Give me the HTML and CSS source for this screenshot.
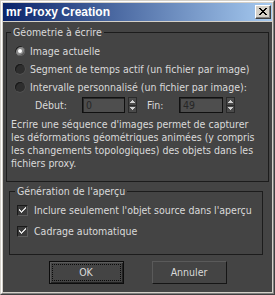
FILE: index.html
```html
<!DOCTYPE html>
<html lang="fr">
<head>
<meta charset="utf-8">
<title>mr Proxy Creation</title>
<link rel="stylesheet" href="styles.css">
</head>
<body>
<div class="window">
  <div class="frame">
    <div class="titlebar">
      <span class="title">mr Proxy Creation</span>
      <button class="close" aria-label="Fermer">
        <svg width="8" height="7" viewBox="0 0 8 7" shape-rendering="crispEdges"><path d="M0 0h2v1H0zM6 0h2v1H6zM1 1h2v1H1zM5 1h2v1H5zM2 2h4v1H2zM3 3h2v1H3zM2 4h4v1H2zM1 5h2v1H1zM5 5h2v1H5zM0 6h2v1H0zM6 6h2v1H6z" fill="#000"/></svg>
      </button>
    </div>
    <div class="client">
      <fieldset class="group g1">
        <legend>Géometrie à écrire</legend>
        <div class="opt"><span class="radio on"></span><span>Image actuelle</span></div>
        <div class="opt"><span class="radio"></span><span>Segment de temps actif (un fichier par image)</span></div>
        <div class="opt"><span class="radio"></span><span>Intervalle personnalisé (un fichier par image):</span></div>
        <div class="range">
          <span class="lbl deb">Début:</span>
          <span class="field f1">0</span>
          <span class="arrows"><svg width="9" height="16" viewBox="0 0 9 16" shape-rendering="crispEdges"><path d="M4 3h1v1H4zM3 4h3v1H3zM2 5h5v1H2z" fill="#d0d0d0"/><path d="M1 8h7v1H1z" fill="#2a2a2a"/><path d="M2 10h5v1H2zM3 11h3v1H3zM4 12h1v1H4z" fill="#d0d0d0"/></svg></span>
          <span class="lbl fin">Fin:</span>
          <span class="field f2">49</span>
          <span class="arrows"><svg width="9" height="16" viewBox="0 0 9 16" shape-rendering="crispEdges"><path d="M4 3h1v1H4zM3 4h3v1H3zM2 5h5v1H2z" fill="#d0d0d0"/><path d="M1 8h7v1H1z" fill="#2a2a2a"/><path d="M2 10h5v1H2zM3 11h3v1H3zM4 12h1v1H4z" fill="#d0d0d0"/></svg></span>
        </div>
        <p class="desc">Ecrire une séquence d'images permet de capturer<br>les déformations géométriques animées (y compris<br>les changements topologiques) des objets dans les<br>fichiers proxy.</p>
      </fieldset>
      <fieldset class="group g2">
        <legend>Génération de l'aperçu</legend>
        <div class="chk"><span class="box"><svg width="9" height="9" viewBox="0 0 9 9" shape-rendering="crispEdges"><path d="M7 1h1v1H7zM6 2h2v1H6zM1 3h1v1H1zM5 3h2v1H5zM1 4h2v1H1zM4 4h2v1H4zM2 5h3v1H2zM3 6h1v1H3z" fill="#dcdcdc"/></svg></span><span>Inclure seulement l'objet source dans l'aperçu</span></div>
        <div class="chk"><span class="box"><svg width="9" height="9" viewBox="0 0 9 9" shape-rendering="crispEdges"><path d="M7 1h1v1H7zM6 2h2v1H6zM1 3h1v1H1zM5 3h2v1H5zM1 4h2v1H1zM4 4h2v1H4zM2 5h3v1H2zM3 6h1v1H3z" fill="#dcdcdc"/></svg></span><span>Cadrage automatique</span></div>
      </fieldset>
      <div class="buttons">
        <button class="btn default"><span class="focus">OK</span></button>
        <button class="btn">Annuler</button>
      </div>
    </div>
  </div>
</div>
</body>
</html>
```
FILE: styles.css
```css
* { box-sizing: border-box; }
html, body { margin: 0; padding: 0; }
body {
  width: 275px;
  height: 295px;
  font-family: "DejaVu Sans Condensed", "Liberation Sans", Arial, sans-serif;
  font-stretch: condensed;
  font-size: 10.5px;
  line-height: 13px;
  overflow: hidden;
}
.window {
  width: 275px;
  height: 295px;
  border: 1px solid;
  border-color: #d4d0c8 #404040 #404040 #d4d0c8;
}
.frame {
  height: 100%;
  border: 1px solid;
  border-color: #ffffff #808080 #808080 #ffffff;
  background: #d4d0c8;
  padding: 1px;
  display: flex;
  flex-direction: column;
}
.titlebar {
  height: 18px;
  flex: none;
  background: linear-gradient(to right, #0a246a, #a6caf0);
  display: flex;
  align-items: center;
  padding: 0 1px 0 3px;
}
.title {
  flex: 1;
  color: #ffffff;
  font-family: "Liberation Sans", Arial, sans-serif;
  font-stretch: normal;
  font-weight: bold;
  font-size: 12px;
  line-height: 14px;
}
.close {
  width: 16px;
  height: 14px;
  padding: 0 0 1px 0;
  margin: 0;
  border: 1px solid;
  border-color: #ffffff #404040 #404040 #ffffff;
  box-shadow: inset -1px -1px 0 #808080;
  background: #d4d0c8;
  display: flex;
  align-items: center;
  justify-content: center;
}
.close svg { display: block; }
.client {
  flex: 1;
  margin-top: 1px;
  background: #444444;
  color: #dadada;
  display: flex;
  flex-direction: column;
}
.group {
  border: 1px solid #1c1c1c;
  min-inline-size: 0;
}
.group legend {
  padding: 0 2px;
  height: 13px;
  line-height: 13px;
}
.g1 {
  margin: 4px 3px 0 3px;
  padding: 3px 4px 11px 4px;
}
.g2 {
  margin: 3px 9px 0 6px;
  padding: 2px 4px 12px 5px;
}
.opt {
  height: 18px;
  display: flex;
  align-items: center;
  margin-left: 4px;
  white-space: nowrap;
}
.radio {
  width: 10px;
  height: 10px;
  border-radius: 50%;
  margin-right: 5px;
  flex: none;
  background: #2e2e2e;
  box-shadow: inset 1px 1px 0 #1a1a1a, 0 0 0 0.5px #5a5a5a;
  display: flex;
  align-items: center;
  justify-content: center;
}
.radio.on {
  background: #8a8a8a;
  box-shadow: inset 1px 1px 0 #1e1e1e, inset -1px -1px 0 #5a5a5a;
}
.radio.on::after {
  content: "";
  width: 4px;
  height: 4px;
  border-radius: 50%;
  background: #ffffff;
}
.range {
  height: 16px;
  margin-top: 1px;
  display: flex;
  align-items: center;
  white-space: nowrap;
}
.lbl { flex: none; }
.deb { margin-left: 24px; width: 47px; }
.fin { margin-left: 10px; width: 32px; }
.field {
  height: 16px;
  flex: none;
  border: 1px solid #101010;
  box-shadow: inset 1px 1px 0 #2a2a2a;
  background: #4e4e4e;
  color: #262626;
  padding-left: 3px;
  line-height: 14px;
}
.f1 { width: 43px; }
.f2 { width: 44px; }
.arrows {
  flex: none;
  width: 9px;
  height: 16px;
  margin-left: 3px;
  background: #4a4a4a;
  box-shadow: inset 0 0 0 1px #2a2a2a;
}
.arrows svg { display: block; }
.desc {
  margin: 5px 0 0 0;
  line-height: 13px;
  white-space: nowrap;
}
.chk {
  height: 21px;
  display: flex;
  align-items: center;
  margin-left: 2px;
  white-space: nowrap;
}
.box {
  width: 11px;
  height: 11px;
  flex: none;
  margin-right: 6px;
  background: #3a3a3a;
  border: 1px solid;
  border-color: #1a1a1a #5c5c5c #5c5c5c #1a1a1a;
  display: flex;
  align-items: center;
  justify-content: center;
}
.box svg { display: block; }
.buttons {
  display: flex;
  justify-content: center;
  gap: 28px;
  margin-top: 6px;
}
.btn {
  width: 75px;
  height: 23px;
  margin: 0;
  padding: 0;
  font: inherit;
  color: #dadada;
  background: #444444;
  border: 1px solid;
  border-color: #5a5a5a #151515 #151515 #5a5a5a;
  display: flex;
  align-items: center;
  justify-content: center;
}
.btn.default {
  border-color: #0c0c0c;
  box-shadow: inset 1px 1px 0 #5a5a5a, inset -1px -1px 0 #222222;
  padding: 2px;
}
.focus {
  width: 100%;
  height: 100%;
  border: 1px dotted #0a0a0a;
  display: flex;
  align-items: center;
  justify-content: center;
}
```
